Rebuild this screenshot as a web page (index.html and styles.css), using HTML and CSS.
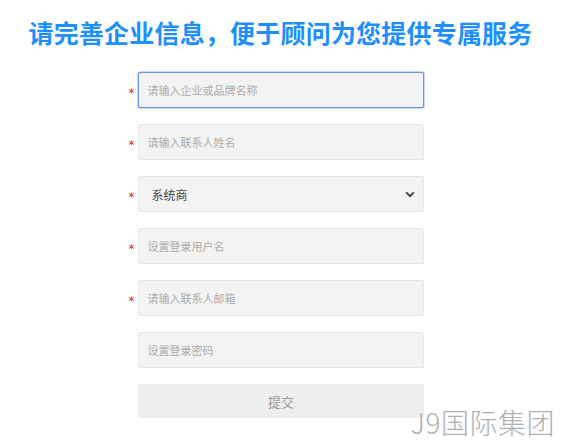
FILE: index.html
```html
<!DOCTYPE html>
<html lang="zh-CN">
<head>
<meta charset="utf-8">
<title>完善企业信息</title>
<link rel="stylesheet" href="styles.css">
</head>
<body>
<div class="page">
  <h1 class="title">请完善企业信息，便于顾问为您提供专属服务</h1>
  <form class="form">
    <div class="row"><span class="star">*</span><input class="field focused" type="text" placeholder="请输入企业或品牌名称"></div>
    <div class="row"><span class="star">*</span><input class="field" type="text" placeholder="请输入联系人姓名"></div>
    <div class="row"><span class="star">*</span>
      <div class="select-wrap">
        <span class="select-text">系统商</span>
        <svg class="chev" width="10" height="7" viewBox="0 0 10 7"><path d="M1.2 1.4 L5 5.2 L8.8 1.4" fill="none" stroke="#444" stroke-width="2"/></svg>
      </div>
    </div>
    <div class="row"><span class="star">*</span><input class="field" type="text" placeholder="设置登录用户名"></div>
    <div class="row"><span class="star">*</span><input class="field" type="text" placeholder="请输入联系人邮箱"></div>
    <div class="row"><span class="star blank"></span><input class="field" type="password" placeholder="设置登录密码"></div>
    <div class="row"><span class="star blank"></span><button class="submit" type="button">提交</button></div>
  </form>
  <div class="watermark">J9国际集团</div>
</div>
</body>
</html>
```
FILE: styles.css
```css
* { box-sizing: border-box; }
html, body { margin: 0; padding: 0; background: #fff; }
body { font-family: "Noto Sans CJK SC", "Noto Sans", sans-serif; }
.page { position: relative; width: 561px; height: 444px; overflow: hidden; }
.title {
  margin: 0;
  padding-top: 15px;
  text-align: center;
  font-size: 25px;
  line-height: 34px;
  font-weight: 700;
  color: #1e8ffe;
  letter-spacing: 0.2px;
}
.form {
  width: 286px;
  margin: 23px auto 0;
  display: flex;
  flex-direction: column;
  gap: 16px;
  padding-left: 1px;
}
.row { display: flex; align-items: center; }
.star {
  width: 8px;
  margin-left: -11px;
  margin-right: 3px;
  text-align: center;
  color: #e02828;
  font-size: 12px;
  line-height: 1;
  padding-top: 6px;
  font-family: "DejaVu Sans", sans-serif;
}
.field {
  width: 286px;
  height: 36px;
  background: #f3f3f3;
  border: 1px solid #e6e6e6;
  border-radius: 2px;
  padding: 0 8px;
  font-family: "Noto Sans CJK SC", sans-serif;
  font-size: 11px;
  color: #555;
  outline: none;
}
.field::placeholder { color: #ababab; }
.field.focused { border: 1px solid #6a93e6; box-shadow: 0 0 0 0.5px #8fb0f0; }
.select-wrap {
  width: 286px;
  height: 36px;
  background: #f3f3f3;
  border: 1px solid #e6e6e6;
  border-radius: 2px;
  display: flex;
  align-items: center;
  justify-content: space-between;
  padding: 0 8px 0 12px;
}
.select-text { font-size: 12px; color: #444; }
.chev { display: block; }
.submit {
  width: 286px;
  height: 34px;
  background: #eeeeee;
  border: none;
  border-radius: 3px;
  color: #9a9a9a;
  font-family: "Noto Sans CJK SC", sans-serif;
  font-size: 13px;
}
.watermark {
  position: absolute;
  right: 6px;
  bottom: 3px;
  font-size: 28px;
  font-weight: 200;
  color: #b0b0b0;
  line-height: 38px;
  letter-spacing: 0.5px;
}
```
